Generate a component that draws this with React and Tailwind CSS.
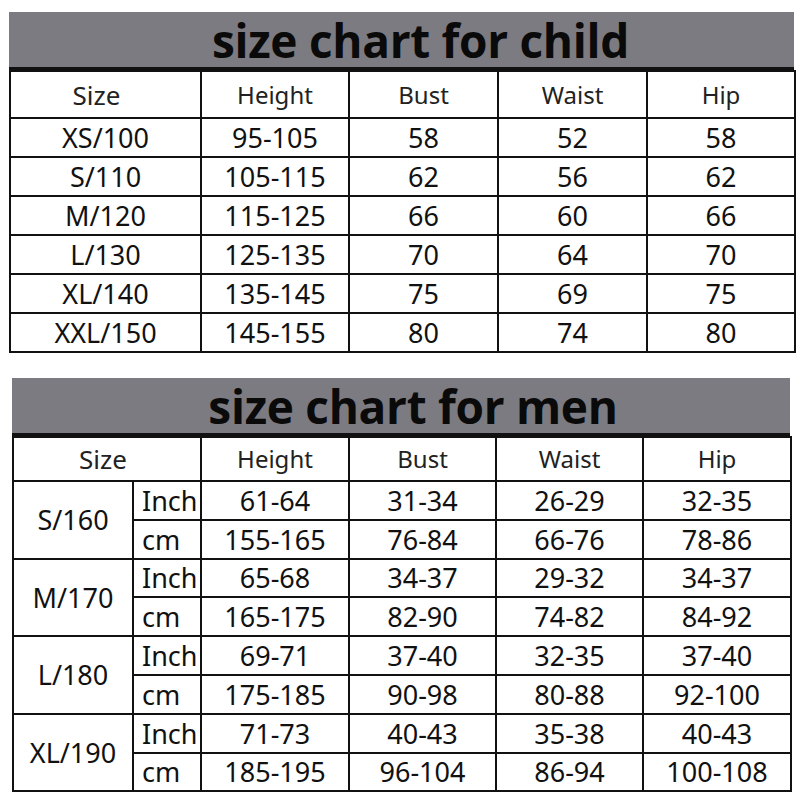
const childRows = [
  ["XS/100", "95-105", "58", "52", "58"],
  ["S/110", "105-115", "62", "56", "62"],
  ["M/120", "115-125", "66", "60", "66"],
  ["L/130", "125-135", "70", "64", "70"],
  ["XL/140", "135-145", "75", "69", "75"],
  ["XXL/150", "145-155", "80", "74", "80"],
];

const menRows = [
  {
    size: "S/160",
    inch: ["61-64", "31-34", "26-29", "32-35"],
    cm: ["155-165", "76-84", "66-76", "78-86"],
  },
  {
    size: "M/170",
    inch: ["65-68", "34-37", "29-32", "34-37"],
    cm: ["165-175", "82-90", "74-82", "84-92"],
  },
  {
    size: "L/180",
    inch: ["69-71", "37-40", "32-35", "37-40"],
    cm: ["175-185", "90-98", "80-88", "92-100"],
  },
  {
    size: "XL/190",
    inch: ["71-73", "40-43", "35-38", "40-43"],
    cm: ["185-195", "96-104", "86-94", "100-108"],
  },
];

const headers = ["Height", "Bust", "Waist", "Hip"];

const cell = "border-2 border-[#111] text-center p-0 leading-none";
const head = `${cell} text-[24px] text-[#222]`;
const body = `${cell} text-[27px] text-[#111]`;

const Title = ({ children, pad }) => (
  <div
    className={`h-[58px] bg-[#7b7b81] border-b-[3px] border-[#111] flex items-center justify-center ${pad}`}
  >
    <span
      className="text-[46px] font-bold text-[#0a0a0a] leading-none tracking-[-0.3px]"
      style={{ fontFamily: '"Open Sans", sans-serif' }}
    >
      {children}
    </span>
  </div>
);

const ChildChart = () => (
  <div className="ml-[9px] w-[785px]">
    <Title pad="pl-[38px]">size chart for child</Title>
    <table className="w-full border-collapse table-fixed">
      <colgroup>
        <col className="w-[191px]" />
        <col className="w-[148px]" />
        <col className="w-[149px]" />
        <col className="w-[149px]" />
        <col className="w-[148px]" />
      </colgroup>
      <thead>
        <tr className="h-[47px]">
          <td className={`${head} text-[26px] pr-[18px]`}>Size</td>
          {headers.map((h) => (
            <td key={h} className={head}>
              {h}
            </td>
          ))}
        </tr>
      </thead>
      <tbody>
        {childRows.map((row) => (
          <tr key={row[0]} className="h-[39px]">
            {row.map((v, i) => (
              <td key={i} className={body}>
                {v}
              </td>
            ))}
          </tr>
        ))}
      </tbody>
    </table>
  </div>
);

const MenChart = () => (
  <div className="ml-[12px] w-[778px] mt-[25px]">
    <Title pad="pl-[24px]">size chart for men</Title>
    <table className="w-full border-collapse table-fixed">
      <colgroup>
        <col className="w-[120px]" />
        <col className="w-[68px]" />
        <col className="w-[148px]" />
        <col className="w-[147px]" />
        <col className="w-[147px]" />
        <col className="w-[148px]" />
      </colgroup>
      <thead>
        <tr className="h-[44px]">
          <td colSpan={2} className={`${head} text-[26px] pr-[8px]`}>
            Size
          </td>
          {headers.map((h) => (
            <td key={h} className={head}>
              {h}
            </td>
          ))}
        </tr>
      </thead>
      <tbody>
        {menRows.map((r) => (
          <>
            <tr key={r.size + "i"} className="h-[38.8px]">
              <td rowSpan={2} className={body}>
                {r.size}
              </td>
              <td className={`${body} !text-left pl-[8px]`}>Inch</td>
              {r.inch.map((v, i) => (
                <td key={i} className={body}>
                  {v}
                </td>
              ))}
            </tr>
            <tr key={r.size + "c"} className="h-[38.8px]">
              <td className={`${body} !text-left pl-[8px]`}>cm</td>
              {r.cm.map((v, i) => (
                <td key={i} className={body}>
                  {v}
                </td>
              ))}
            </tr>
          </>
        ))}
      </tbody>
    </table>
  </div>
);

export default function App() {
  return (
    <div
      className="w-[800px] h-[800px] bg-white pt-[12px] overflow-hidden"
      style={{ fontFamily: '"Noto Sans", sans-serif' }}
    >
      <ChildChart />
      <MenChart />
    </div>
  );
}
